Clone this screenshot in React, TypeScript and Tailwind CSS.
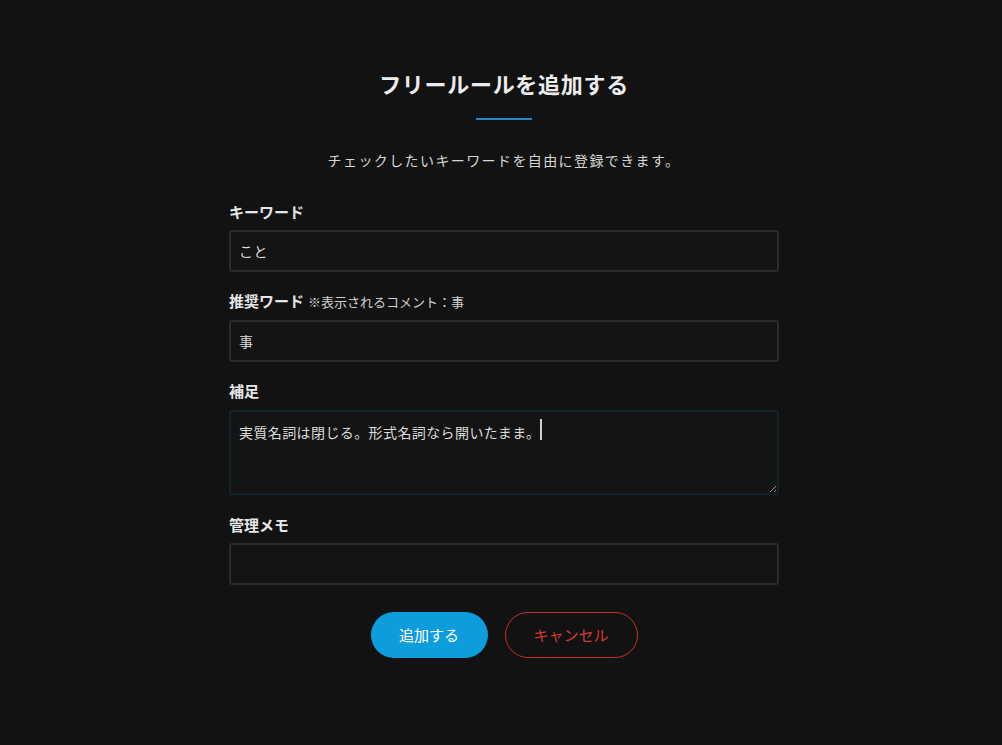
const font = { fontFamily: '"Noto Sans CJK JP", "Noto Sans", sans-serif' };

const note = "実質名詞は閉じる。形式名詞なら開いたまま。";

export default function App() {
  return (
    <div
      className="min-h-[745px] w-full bg-[#121212] text-[#e6e6e6] flex flex-col items-center pt-[68px] pl-[6px] [color-scheme:dark]"
      style={font}
    >
      {/* Title */}
      <h1 className="text-[22px] font-bold leading-[30px] tracking-[0.7px] text-[#ececec]">
        フリールールを追加する
      </h1>
      <div className="mt-[20px] h-[2px] w-[56px] bg-[#1b8ccc]" />
      <p className="mt-[30px] text-[14px] leading-[20px] tracking-[1.4px] text-[#d6d6d6]">
        チェックしたいキーワードを自由に登録できます。
      </p>

      {/* Form */}
      <div className="mt-[32px] w-[550px] flex flex-col">
        <label className="text-[15px] font-bold leading-[20px] text-[#e6e6e6]">キーワード</label>
        <input
          defaultValue="こと"
          className="mt-[8px] h-[42px] w-full rounded-[3px] border-2 border-[#2b2b2b] bg-[#141414] px-[8px] text-[14px] tracking-[0.4px] text-[#dcdcdc] outline-none"
        />

        <label className="mt-[19px] flex items-baseline gap-[4px] text-[15px] font-bold leading-[20px] text-[#e6e6e6]">
          推奨ワード
          <span className="text-[13px] font-normal text-[#d0d0d0]">※表示されるコメント：事</span>
        </label>
        <input
          defaultValue="事"
          className="mt-[8px] h-[42px] w-full rounded-[3px] border-2 border-[#2b2b2b] bg-[#141414] px-[8px] text-[14px] tracking-[0.4px] text-[#dcdcdc] outline-none"
        />

        <label className="mt-[19px] text-[15px] font-bold leading-[20px] text-[#e6e6e6]">補足</label>
        <div className="relative mt-[9px]">
          <textarea
            defaultValue={note}
            className="block h-[85px] w-full resize-y rounded-[3px] border-2 border-[#0e252d] bg-[#141414] px-[8px] py-[9px] text-[14px] leading-[22px] tracking-[0.4px] text-[#dcdcdc] outline-none"
          />
          {/* caret mirror */}
          <div className="pointer-events-none absolute inset-0 border-2 border-transparent px-[8px] py-[9px] text-[14px] leading-[22px] tracking-[0.4px] text-transparent">
            {note}
            <span className="inline-block h-[21px] w-[2px] align-top -translate-y-[2px] bg-[#cfcfcf]" />
          </div>
        </div>

        <label className="mt-[20px] text-[15px] font-bold leading-[20px] text-[#e6e6e6]">管理メモ</label>
        <input
          className="mt-[8px] h-[42px] w-full rounded-[3px] border-2 border-[#2b2b2b] bg-[#141414] px-[8px] text-[14px] text-[#dcdcdc] outline-none"
        />

        {/* Actions */}
        <div className="mt-[27px] flex justify-center gap-[17px]">
          <button className="h-[46px] w-[117px] rounded-full bg-[#0e9ddc] text-[15px] text-white">
            追加する
          </button>
          <button className="h-[46px] w-[133px] rounded-full border border-[#c8312e] text-[15px] text-[#d23a35]">
            キャンセル
          </button>
        </div>
      </div>
    </div>
  );
}
